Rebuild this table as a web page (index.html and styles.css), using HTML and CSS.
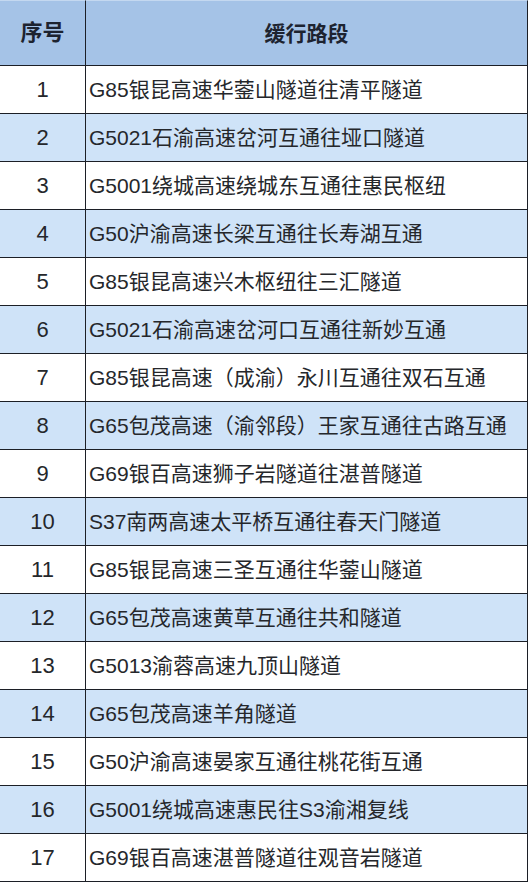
FILE: index.html
```html
<!DOCTYPE html>
<html lang="zh-CN">
<head>
<meta charset="utf-8">
<title>缓行路段</title>
<link rel="stylesheet" href="styles.css">
</head>
<body>
<div class="table">
  <div class="cell head num">序号</div>
  <div class="cell head">缓行路段</div>

  <div class="cell num">1</div><div class="cell road">G85银昆高速华蓥山隧道往清平隧道</div>
  <div class="cell num alt">2</div><div class="cell road alt">G5021石渝高速岔河互通往垭口隧道</div>
  <div class="cell num">3</div><div class="cell road">G5001绕城高速绕城东互通往惠民枢纽</div>
  <div class="cell num alt">4</div><div class="cell road alt">G50沪渝高速长梁互通往长寿湖互通</div>
  <div class="cell num">5</div><div class="cell road">G85银昆高速兴木枢纽往三汇隧道</div>
  <div class="cell num alt">6</div><div class="cell road alt">G5021石渝高速岔河口互通往新妙互通</div>
  <div class="cell num">7</div><div class="cell road">G85银昆高速（成渝）永川互通往双石互通</div>
  <div class="cell num alt">8</div><div class="cell road alt">G65包茂高速（渝邻段）王家互通往古路互通</div>
  <div class="cell num">9</div><div class="cell road">G69银百高速狮子岩隧道往湛普隧道</div>
  <div class="cell num alt">10</div><div class="cell road alt">S37南两高速太平桥互通往春天门隧道</div>
  <div class="cell num">11</div><div class="cell road">G85银昆高速三圣互通往华蓥山隧道</div>
  <div class="cell num alt">12</div><div class="cell road alt">G65包茂高速黄草互通往共和隧道</div>
  <div class="cell num">13</div><div class="cell road">G5013渝蓉高速九顶山隧道</div>
  <div class="cell num alt">14</div><div class="cell road alt">G65包茂高速羊角隧道</div>
  <div class="cell num">15</div><div class="cell road">G50沪渝高速晏家互通往桃花街互通</div>
  <div class="cell num alt">16</div><div class="cell road alt">G5001绕城高速惠民往S3渝湘复线</div>
  <div class="cell num">17</div><div class="cell road">G69银百高速湛普隧道往观音岩隧道</div>
</div>
</body>
</html>
```

FILE: styles.css
```css
html, body {
  margin: 0;
  padding: 0;
  background: #ffffff;
}

body {
  font-family: "Liberation Sans", "Noto Sans CJK SC", sans-serif;
  color: #25272b;
}

.table {
  display: grid;
  grid-template-columns: 86px 442px;
  grid-template-rows: 66px repeat(17, 48px);
  width: 528px;
}

.cell {
  box-sizing: border-box;
  border-right: 1px solid #1c1f26;
  border-bottom: 1px solid #1c1f26;
  display: flex;
  align-items: center;
  font-size: 21px;
  line-height: 1;
  white-space: nowrap;
  overflow: hidden;
}

.head {
  background: #a5c3e7;
  border-top: 1px solid #c4d8f0;
  justify-content: center;
  font-weight: bold;
  font-size: 21px;
  color: #1d2330;
}

.num {
  justify-content: center;
  font-size: 22px;
}

.road {
  padding-left: 3px;
}

.alt {
  background: #cfe3f8;
}
```
